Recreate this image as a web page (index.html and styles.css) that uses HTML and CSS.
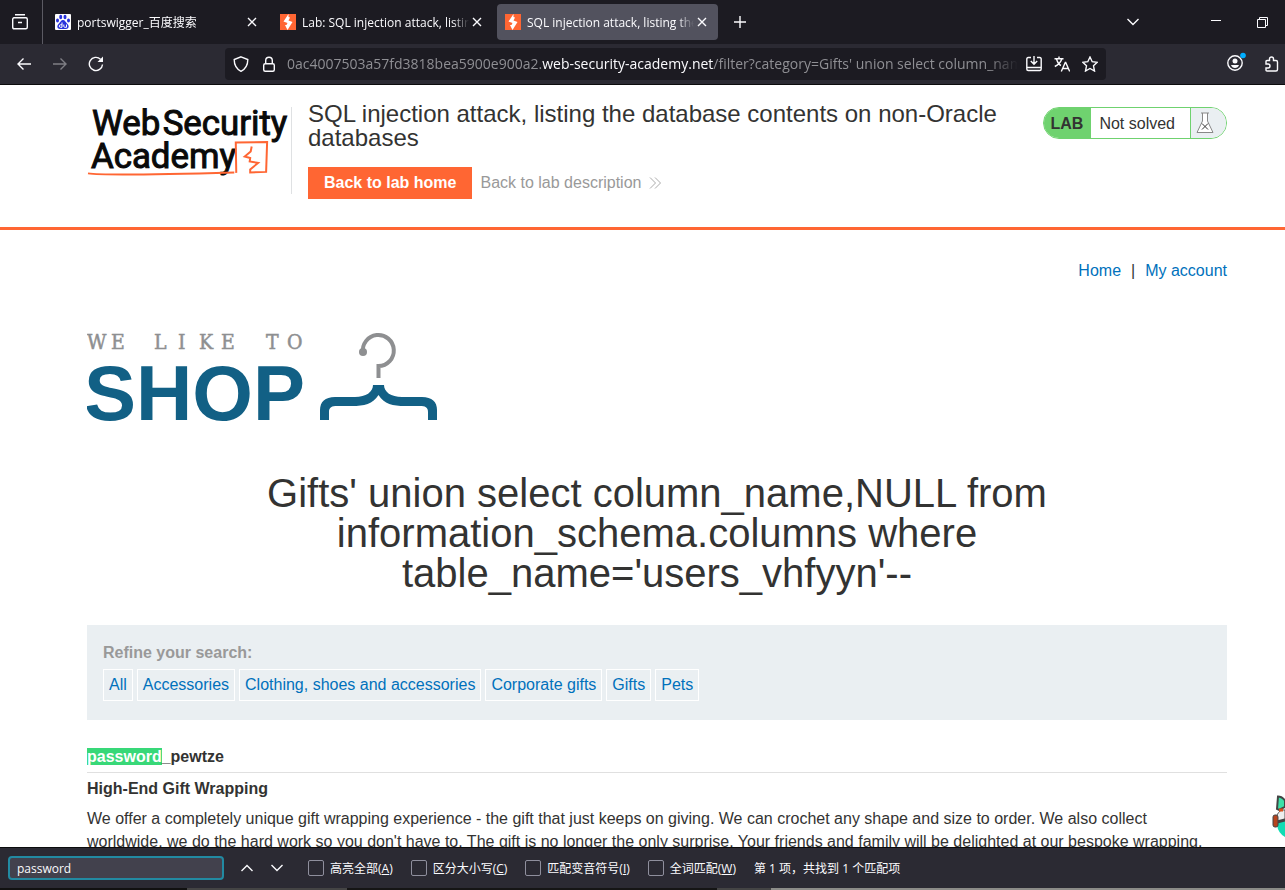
FILE: index.html
```html
<!DOCTYPE html>
<html lang="en">
<head>
    <meta charset="UTF-8">
    <meta name="viewport" content="width=device-width, initial-scale=1.0">
    <title>SQL injection attack, listing the database contents on non-Oracle databases</title>
    <link rel="stylesheet" href="styles.css">
</head>
<body>
    <div class="tab-bar">
        <button class="icon-button view-button" aria-label="Firefox View">
            <svg width="16" height="16" viewBox="0 0 16 16"><path d="M3 .8h10M1.5 3.8h13M2.2 3.8h11.6q1.5 0 1.5 1.5v8q0 1.5-1.5 1.5H2.2Q.7 14.800.7 13.300V5.300Q.7 3.800 2.200 3.800M6 8.500h4" /></svg>
        </button>
        <div class="tabs">
            <div class="tab">
                <svg class="favicon" width="16" height="16" viewBox="0 0 16 16">
                    <rect width="16" height="16" rx="1" fill="#fff"/>
                    <g fill="#2832dc">
                        <ellipse cx="5.700" cy="3" rx="1.500" ry="2.200"/><ellipse cx="10" cy="3" rx="1.500" ry="2.200"/>
                        <ellipse cx="2.500" cy="6.500" rx="1.500" ry="2"/><ellipse cx="13.500" cy="6.500" rx="1.500" ry="2"/>
                        <path d="M8 6c2 0 2.500 2 4 3.500 3 2.500 1.500 5.500-1 5.500H5c-2.500 0-4-3-1-5.500C5.500 8 6 6 8 6z"/>
                    </g>
                    <path d="M7 8.500v4.800H5.500q-1.200 0-1.200-1.200T5.500 10.800H7M8.800 10.500v1.800q0 1 1 1h1.700v-2.800" fill="none" stroke="#fff"/>
                </svg>
                <span class="tab-title">portswigger_百度搜索</span>
                <button class="icon-button" aria-label="Close tab"><svg width="10" height="10" viewBox="0 0 10 10"><path d="M1 1l8 8M9 1L1 9"/></svg></button>
            </div>
            <div class="tab">
                <svg class="favicon" width="16" height="16" viewBox="0 0 16 16"><rect width="16" height="16" fill="#f63"/><path d="M8.500 0L3.500 7.500 7.500 9l-1 2H5l2.500 5 5-8L8.500 6.500 10 3.500 8.500 3z" fill="#fff"/></svg>
                <span class="tab-title">Lab: SQL injection attack, listing</span>
                <button class="icon-button" aria-label="Close tab"><svg width="10" height="10" viewBox="0 0 10 10"><path d="M1 1l8 8M9 1L1 9"/></svg></button>
            </div>
            <div class="tab active">
                <svg class="favicon" width="16" height="16" viewBox="0 0 16 16"><rect width="16" height="16" fill="#f63"/><path d="M8.500 0L3.500 7.500 7.500 9l-1 2H5l2.500 5 5-8L8.500 6.500 10 3.500 8.500 3z" fill="#fff"/></svg>
                <span class="tab-title">SQL injection attack, listing the</span>
                <button class="icon-button" aria-label="Close tab"><svg width="10" height="10" viewBox="0 0 10 10"><path d="M1 1l8 8M9 1L1 9"/></svg></button>
            </div>
            <button class="icon-button new-tab" aria-label="New tab"><svg width="12" height="12" viewBox="0 0 12 12"><path d="M6 0v12M0 6h12"/></svg></button>
        </div>
        <div class="window-buttons">
            <button class="icon-button all-tabs" aria-label="All tabs"><svg width="12" height="8" viewBox="0 0 12 8"><path d="M.5 1L6 6.500 11.500 1"/></svg></button>
            <button class="icon-button" aria-label="Minimize"><svg width="10" height="10" viewBox="0 0 10 10"><path d="M0 3.500h10" stroke-width="1"/></svg></button>
            <button class="icon-button" aria-label="Restore"><svg width="11" height="11" viewBox="0 0 11 11"><path d="M.5 2.500h8v8h-8zM2.500 2.500v-2h8v8h-2" stroke-width="1"/></svg></button>
        </div>
    </div>

    <div class="nav-bar">
        <div class="nav-buttons">
            <button class="icon-button" aria-label="Back"><svg width="16" height="16" viewBox="0 0 16 16"><path d="M15 8H2M7.500 2.500L2 8l5.500 5.500"/></svg></button>
            <button class="icon-button disabled" aria-label="Forward"><svg width="16" height="16" viewBox="0 0 16 16"><path d="M1 8h13M8.500 2.500L14 8l-5.500 5.500"/></svg></button>
            <button class="icon-button" aria-label="Reload"><svg width="16" height="16" viewBox="0 0 16 16"><path d="M14.500 8.500A6.600 6.600 0 1 1 12.500 3.200"/><path d="M15 .5V6H9.500z" fill="#fbfbfe" stroke="none"/></svg></button>
        </div>
        <div class="url-bar">
            <svg width="16" height="16" viewBox="0 0 16 16"><path d="M8 .8L14.800 3.500C14.800 9 12.500 13 8 15.300 3.500 13 1.200 9 1.200 3.500z"/></svg>
            <svg width="16" height="16" viewBox="0 0 16 16"><rect x="2.700" y="7.700" width="10.600" height="7.600" rx="1.500"/><path d="M4.700 7.500V4.500a3.300 3.300 0 0 1 6.600 0v3"/></svg>
            <span class="url">0ac4007503a57fd3818bea5900e900a2.<b>web-security-academy.net</b>/filter?category=Gifts' union select column_name</span>
            <button class="icon-button" aria-label="Install"><svg width="16" height="16" viewBox="0 0 16 16"><path d="M5 1.500H2.200Q.8 1.500.8 3v10q0 1.500 1.400 1.500h11.600q1.400 0 1.400-1.500V3q0-1.500-1.400-1.500H11M8 0v8M4.800 5L8 8.200 11.200 5M1 11.500h14"/></svg></button>
            <button class="icon-button" aria-label="Translate"><svg width="16" height="16" viewBox="0 0 16 16"><path d="M.5 2.800h9M5 .5v2M7.800 3Q6 8 .8 10.500M2.500 3Q4 8 7 9.500M7.300 15.500l4-9h.4l4 9M8.800 12.500h5.400"/></svg></button>
            <button class="icon-button" aria-label="Bookmark"><svg width="16" height="16" viewBox="0 0 16 16"><path d="M8 1l2.200 4.700 5 .6-3.700 3.500 1 5.200L8 12.500 3.500 15l1-5.200L.8 6.300l5-.6z"/></svg></button>
        </div>
        <div class="toolbar-end">
            <button class="icon-button account" aria-label="Account">
                <svg width="20" height="20" viewBox="0 0 20 20"><circle cx="9" cy="11" r="7.200"/><circle cx="9" cy="9" r="2.500" fill="#fbfbfe" stroke="none"/><path d="M5 13h8q-1 3-4 3t-4-3z" fill="#fbfbfe" stroke="none"/><circle cx="17" cy="3.500" r="2.800" fill="#00aeff" stroke="none"/></svg>
            </button>
            <button class="icon-button" aria-label="Extensions"><svg width="16" height="16" viewBox="0 0 16 16"><path d="M2 8V5.500Q2 4.500 3 4.500h2.500V3a2 2 0 0 1 4 0v1.500H12q1.500 0 1.500 1.500v7.500q0 1.500-1.500 1.500H3q-1 0-1-1V12h2a2 2 0 0 0 0-4z"/></svg></button>
        </div>
    </div>

    <div class="page">
        <header class="lab-header">
            <div class="container lab-row">
                <svg class="academy-logo" width="205" height="87" viewBox="0 0 205 87">
                    <g class="academy-text">
                        <text x="5" y="28">Web</text>
                        <text x="76" y="28">Security</text>
                        <text x="4" y="61">Academy</text>
                    </g>
                    <path d="M1 66.500Q20 69 148 65.500" fill="none" stroke="#f63" stroke-width="2"/>
                    <path d="M150 66l-.5-30.500 31.500-.5-1 30-16 .5v-3l8-6.500-8.500-1.500.5-3.500-5.500-1.500 6-5 1-5" fill="none" stroke="#f63" stroke-width="2"/>
                </svg>
                <div class="lab-title">
                    <h2>SQL injection attack, listing the database contents on non-Oracle databases</h2>
                    <div class="lab-links">
                        <a class="lab-home" href="#">Back to lab home</a>
                        <a class="lab-description" href="#">Back to lab description
                            <svg width="12" height="12" viewBox="0 0 12 12"><path d="M1 .5L6.500 6 1 11.500M6 .5L11.500 6 6 11.500"/></svg>
                        </a>
                    </div>
                </div>
                <div class="lab-status">
                    <span class="lab-tag">LAB</span>
                    <p>Not solved</p>
                    <span class="flask">
                        <svg width="18" height="22" viewBox="0 0 18 22"><path d="M5 1h8M6.500 1v8L1 20.500h16L11.500 9V1" fill="#fff" stroke="#888"/><path d="M6 11.500l6 6M12 11.500l-6 6" stroke="#333"/></svg>
                    </span>
                </div>
            </div>
        </header>

        <main class="container">
            <nav class="top-links">
                <a href="#">Home</a><span>|</span><a href="#">My account</a>
            </nav>
            <svg class="shop-logo" width="352" height="92" viewBox="0 0 352 92">
                <text class="shop-small" x="0 24 67 91 112 134 179 200" y="17">WELIKETO</text>
                <text class="shop-big" x="-3" y="88">SHOP</text>
                <path d="M276 21a15.500 15.500 0 1 1 15.500 13V46" fill="none" stroke="#8e8f91" stroke-width="4"/>
                <circle cx="276" cy="20" r="4" fill="#8e8f91"/>
                <path d="M286 53h11c0 7 7 12 18 12h20c10 0 15 5 15 13v10h-9v-8c0-5-3-6-8-6h-15c-12 0-21-2-26.500-11-5.500 9-14.500 11-26.500 11h-15c-5 0-8 1-8 6v8h-9V78c0-8 5-13 15-13h20c11 0 18-5 18-12z" fill="#126085"/>
            </svg>
            <h1>Gifts' union select column_name,NULL from information_schema.columns where table_name='users_vhfyyn'--</h1>
            <section class="search-filters">
                <h3>Refine your search:</h3>
                <div class="filter-list">
                    <a href="#">All</a>
                    <a href="#">Accessories</a>
                    <a href="#">Clothing, shoes and accessories</a>
                    <a href="#">Corporate gifts</a>
                    <a href="#">Gifts</a>
                    <a href="#">Pets</a>
                </div>
            </section>
            <table class="results">
                <tbody>
                    <tr><th><mark>password</mark>_pewtze</th></tr>
                    <tr><th>High-End Gift Wrapping</th></tr>
                    <tr><td>We offer a completely unique gift wrapping experience - the gift that just keeps on giving. We can crochet any shape and size to order. We also collect worldwide, we do the hard work so you don't have to. The gift is no longer the only surprise. Your friends and family will be delighted at our bespoke wrapping.</td></tr>
                </tbody>
            </table>
        </main>

        <svg class="mascot" width="13" height="44" viewBox="0 0 13 44">
            <path d="M5 14L6 1.500q4 0 7 4V12l-6 3z" fill="#3de0a8" stroke="#444" stroke-width="2"/>
            <path d="M5 30q1 8 8 12V16q-8 3-8 14z" fill="#12dcb4"/>
            <path d="M5 20q3-6 8-5v9q-4 2-8 4z" fill="#eee" stroke="#555"/>
            <path d="M5 27l8-2" stroke="#444" stroke-width="3"/>
            <rect x="1" y="20" width="5" height="12" rx="2" fill="#b7441e" stroke="#444"/>
            <path d="M7 15h4" stroke="#d8501c" stroke-width="3"/>
        </svg>
    </div>

    <div class="find-bar" lang="zh-CN">
        <input class="find-input" type="text" value="password" aria-label="在页面中查找">
        <div class="find-arrows">
            <button class="icon-button" aria-label="上一个"><svg width="12" height="8" viewBox="0 0 12 8"><path d="M.5 7L6 1.500 11.500 7"/></svg></button>
            <button class="icon-button" aria-label="下一个"><svg width="12" height="8" viewBox="0 0 12 8"><path d="M.5 1L6 6.500 11.500 1"/></svg></button>
        </div>
        <div class="find-options">
            <label><input type="checkbox"><span>高亮全部(<u>A</u>)</span></label>
            <label><input type="checkbox"><span>区分大小写(<u>C</u>)</span></label>
            <label><input type="checkbox"><span>匹配变音符号(<u>I</u>)</span></label>
            <label><input type="checkbox"><span>全词匹配(<u>W</u>)</span></label>
            <span>第 1 项，共找到 1 个匹配项</span>
        </div>
    </div>
    <div class="taskbar-edge"></div>
</body>
</html>
```

FILE: styles.css
```css
* {
    box-sizing: border-box;
}
body {
    display: flex;
    flex-direction: column;
    height: 100vh;
    margin: 0;
    overflow: hidden;
    background-color: #fff;
    color: #333332;
    font-family: "Liberation Sans", Arial, sans-serif;
    font-size: 16px;
}
a {
    color: #0071bc;
    text-decoration: none;
}

/* browser chrome */
.tab-bar,
.nav-bar,
.find-bar {
    display: flex;
    align-items: center;
    flex-shrink: 0;
    color: #fbfbfe;
    font-family: "Open Sans", "Noto Sans CJK SC", sans-serif;
    font-size: 12px;
}
.icon-button {
    display: flex;
    align-items: center;
    justify-content: center;
    flex-shrink: 0;
    padding: 0;
    border: none;
    background: none;
    cursor: pointer;
}
.icon-button svg,
.url-bar svg {
    fill: none;
    stroke: #fbfbfe;
    stroke-width: 1.4;
    flex-shrink: 0;
}
.disabled {
    opacity: 0.4;
}
.tab-bar {
    height: 44px;
    background-color: #1c1b22;
}
.view-button {
    width: 43px;
    height: 44px;
    padding-right: 3px;
    border-right: 1px solid #5b5a63;
}
.tabs {
    display: flex;
    align-items: center;
    gap: 4px;
    padding-left: 4px;
}
.tab {
    display: flex;
    align-items: center;
    width: 221px;
    height: 36px;
    padding: 0 11px 0 8px;
    border-radius: 4px;
}
.tab.active {
    background-color: #52525e;
}
.favicon {
    flex-shrink: 0;
    margin-right: 6px;
}
.tab-title {
    flex: 1;
    overflow: hidden;
    white-space: nowrap;
    margin-right: 3px;
    mask-image: linear-gradient(to left, transparent, #000 16px);
}
.new-tab {
    width: 36px;
    height: 36px;
}
.window-buttons {
    display: flex;
    align-items: center;
    gap: 36px;
    margin-left: auto;
    padding-right: 17px;
}
.all-tabs {
    margin-right: 36px;
}
.nav-bar {
    height: 41px;
    background-color: #2b2a33;
    border-bottom: 1px solid #0c0c0d;
}
.nav-buttons {
    display: flex;
    gap: 20px;
    padding: 0 121px 0 16px;
}
.url-bar {
    display: flex;
    align-items: center;
    flex: 1;
    gap: 12px;
    min-width: 0;
    height: 32px;
    padding: 0 8px;
    border-radius: 4px;
    background-color: #1c1b22;
}
.url {
    flex: 1;
    overflow: hidden;
    white-space: nowrap;
    font-size: 14px;
    line-height: 20px;
    color: #8f8f94;
    margin: 0 -4px 0 -2px;
    mask-image: linear-gradient(to left, transparent, #000 30px);
}
.url b {
    font-weight: normal;
    color: #fbfbfe;
}
.toolbar-end {
    display: flex;
    align-items: center;
    gap: 18px;
    padding: 0 5px 0 120px;
}
.account {
    padding-bottom: 4px;
}

/* lab page */
.page {
    position: relative;
    flex: 1;
    min-height: 0;
    overflow: hidden;
}
.container {
    padding: 0 58px 0 87px;
}
.lab-header {
    border-bottom: 3px solid #f63;
}
.lab-row {
    display: flex;
    align-items: flex-start;
    padding-top: 22px;
    padding-bottom: 28px;
}
.academy-logo {
    flex-shrink: 0;
    border-right: 1px solid #dfe1e3;
}
.academy-text {
    font-family: Roboto, sans-serif;
    font-size: 35px;
    fill: #0a0a0a;
    stroke: #0a0a0a;
    stroke-width: 1;
}
.lab-title {
    flex: 1;
    padding: 0 40px 0 16px;
}
.lab-title h2 {
    margin: -5px 0 17px;
    font-size: 24px;
    font-weight: normal;
    line-height: 24px;
}
.lab-links {
    display: flex;
    align-items: center;
    gap: 8px;
}
.lab-home {
    padding: 0 16px;
    background-color: #f63;
    color: #fff;
    font-weight: bold;
    line-height: 32px;
}
.lab-description {
    display: flex;
    align-items: center;
    gap: 8px;
    color: #999;
}
.lab-description svg {
    fill: none;
    stroke: #aaa;
}
.lab-status {
    display: flex;
    flex-shrink: 0;
    height: 32px;
    overflow: hidden;
    border: 1px solid #6fd26f;
    border-radius: 16px;
    line-height: 31px;
}
.lab-tag {
    padding: 0 8px 0 7px;
    background-color: #6fd26f;
    font-weight: bold;
}
.lab-status p {
    margin: 0;
    padding: 0 15px 0 8px;
    border-right: 1px solid #6fd26f;
}
.flask {
    display: flex;
    align-items: center;
    width: 35px;
    padding-left: 5px;
    background-color: #eaeff2;
}
.top-links {
    display: flex;
    justify-content: flex-end;
    gap: 10px;
    padding-top: 29px;
    line-height: 24px;
}
.shop-logo {
    display: block;
    margin-top: 49px;
}
.shop-small {
    font-family: "DejaVu Serif Condensed", "DejaVu Serif", serif;
    font-size: 21px;
    fill: #8e8f91;
    stroke: #8e8f91;
    stroke-width: 0.5;
}
.shop-big {
    font-size: 78px;
    font-weight: bold;
    fill: #126085;
}
h1 {
    margin: 49px 0 32px;
    font-size: 40px;
    font-weight: normal;
    line-height: 40px;
    text-align: center;
}
.search-filters {
    padding: 16px 16px 19px;
    background-color: #eaeff2;
}
.search-filters h3 {
    margin: 0 0 4px;
    color: #999;
    font-size: 16px;
    line-height: 24px;
}
.filter-list {
    display: flex;
    flex-wrap: wrap;
    gap: 4px;
}
.filter-list a {
    padding: 0 5px;
    border: 1px solid #fff;
    line-height: 30px;
}
.results {
    width: 100%;
    margin-top: 21px;
    border-collapse: collapse;
    line-height: 23px;
}
.results th,
.results td {
    padding: 4px 0;
    text-align: left;
}
.results td {
    padding: 3px 16px 4px 0;
}
.results tr:first-child {
    border-bottom: 1px solid #e0e0e0;
}
.results mark {
    background-color: #38d878;
    color: #fff;
}
.mascot {
    position: absolute;
    right: 0;
    bottom: 8px;
}

/* find bar */
.find-bar {
    height: 41px;
    padding: 0 8px;
    border-top: 1px solid #0c0c0d;
    background-color: #2b2a33;
}
.find-input {
    width: 216px;
    height: 24px;
    padding: 0 7px;
    border: 2px solid #228aa2;
    border-radius: 4px;
    background-color: #42414d;
    color: #fbfbfe;
    font-family: inherit;
    font-size: 12px;
}
.find-arrows {
    display: flex;
    gap: 18px;
    padding: 0 25px 0 17px;
}
.find-options {
    display: flex;
    align-items: center;
    gap: 18px;
    white-space: nowrap;
}
.find-options label {
    display: flex;
    align-items: center;
    gap: 6px;
}
.find-options input {
    appearance: none;
    width: 16px;
    height: 16px;
    margin: 0;
    border: 1px solid #8f8f9d;
    border-radius: 2px;
    background-color: #2b2a33;
}
.taskbar-edge {
    flex-shrink: 0;
    height: 2px;
    background: linear-gradient(to right, #111 187px, #444 187px, #444 347px, #151515 347px, #151515 717px, #444 717px, #444 771px, #8c8c88 771px);
}
```
